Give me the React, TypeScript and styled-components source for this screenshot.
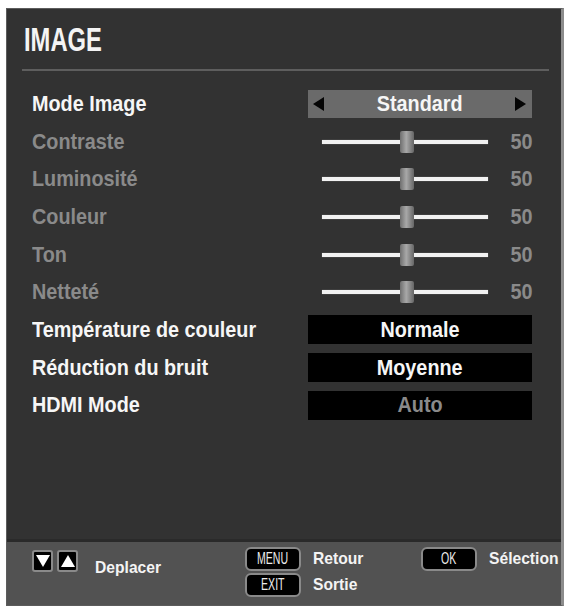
import styled, { createGlobalStyle } from 'styled-components';

const GlobalStyle = createGlobalStyle`
  html, body {
    margin: 0;
    padding: 0;
    background: #ffffff;
  }
  body {
    font-family: 'Liberation Sans', Arial, sans-serif;
  }
`;

const Screen = styled.div`
  box-sizing: border-box;
  width: 558px;
  height: 598px;
  margin: 8px 0 0 6px;
  background: #323232;
  border: 1px solid #5c5c5c;
  border-right: 3px solid #8c8c8c;
  display: flex;
  flex-direction: column;
`;

const Header = styled.div`
  padding: 12px 0 0 17px;
  height: 38px;
`;

const Title = styled.h1`
  margin: 0;
  font-size: 33px;
  line-height: 38px;
  font-weight: bold;
  color: #f4f4f4;
  transform: scaleX(0.72);
  transform-origin: left center;
`;

const Divider = styled.div`
  height: 2px;
  margin: 10px 12px 0 15px;
  background: #5e5e5e;
`;

const List = styled.div`
  display: grid;
  grid-auto-rows: 37.7px;
  padding: 14px 29px 0 25px;
`;

const Row = styled.div`
  display: grid;
  grid-template-columns: 1fr 224px;
  align-items: center;
`;

/* the TV font is a tall, slightly condensed grotesque */
const Narrow = styled.span<{ $origin?: string }>`
  display: inline-block;
  font-size: 22px;
  font-weight: bold;
  transform: scaleX(0.9);
  transform-origin: ${(p) => p.$origin ?? 'left'} center;
  white-space: nowrap;
`;

const Label = styled(Narrow)<{ $dim?: boolean }>`
  justify-self: start;
  color: ${(p) => (p.$dim ? '#8a8a8a' : '#f6f6f6')};
`;

const Selector = styled.div`
  height: 28px;
  background: #6a6a6a;
  display: flex;
  align-items: center;
  justify-content: space-between;
  padding: 0 6px 0 5px;
`;

const Arrow = styled.span<{ $dir: 'left' | 'right' }>`
  width: 0;
  height: 0;
  border-top: 7px solid transparent;
  border-bottom: 7px solid transparent;
  ${(p) =>
    p.$dir === 'left'
      ? 'border-right: 11px solid #050505;'
      : 'border-left: 11px solid #050505;'}
`;

const SelectorText = styled(Narrow)`
  color: #f6f6f6;
`;

const SliderCell = styled.div`
  display: flex;
  align-items: center;
  padding-left: 14px;
`;

const Track = styled.div`
  position: relative;
  width: 166px;
  height: 4px;
  background: #f2f2f2;
  box-shadow: 0 0 1px #bbb;
`;

const Knob = styled.div`
  position: absolute;
  top: 50%;
  width: 14px;
  height: 22px;
  transform: translate(-50%, -50%);
  border-radius: 2px;
  background: linear-gradient(to right, #6e6e6e, #a8a8a8 45%, #8a8a8a 70%, #666);
`;

const Amount = styled(Narrow)`
  margin-left: auto;
  color: #8a8a8a;
`;

const ValueBox = styled.div<{ $dim?: boolean }>`
  height: 29px;
  background: #000;
  display: flex;
  align-items: center;
  justify-content: center;
  color: ${(p) => (p.$dim ? '#8a8a8a' : '#f6f6f6')};
`;

const Footer = styled.div`
  margin-top: auto;
  height: 66px;
  background: #525252;
  border-top: 3px solid #2a2a2a;
  display: grid;
  grid-template-columns: 213px 176px auto;
  align-items: start;
  padding: 5px 0 0 25px;
  box-sizing: border-box;
`;

const FooterGroup = styled.div`
  display: flex;
  align-items: flex-start;
  gap: 13px;
`;

const KeyColumn = styled.div`
  display: grid;
  grid-template-columns: 56px auto;
  align-content: start;
  column-gap: 12px;
  row-gap: 2px;
  align-items: center;
`;

const NavKeys = styled.div`
  display: flex;
  gap: 4px;
  margin-right: 4px;
  padding-top: 3px;
`;

const NavKey = styled.div`
  box-sizing: border-box;
  width: 21px;
  height: 22px;
  border: 2px solid #8a8a8a;
  border-radius: 3px;
  background: #000;
  display: flex;
  align-items: center;
  justify-content: center;
`;

const Tri = styled.span<{ $up?: boolean }>`
  width: 0;
  height: 0;
  border-left: 7px solid transparent;
  border-right: 7px solid transparent;
  ${(p) =>
    p.$up ? 'border-bottom: 12px solid #fff;' : 'border-top: 12px solid #fff;'}
`;

const KeyCap = styled.div`
  box-sizing: border-box;
  height: 24px;
  border: 2px solid #8a8a8a;
  border-radius: 6px;
  background: #000;
  color: #ececec;
  font-size: 16px;
  display: flex;
  align-items: center;
  justify-content: center;
  span {
    display: inline-block;
    transform: scaleX(0.66);
  }
`;

const FooterText = styled.span`
  display: inline-block;
  justify-self: start;
  font-size: 17px;
  font-weight: bold;
  color: #f4f4f4;
  transform: scaleX(0.92);
  transform-origin: left center;
  white-space: nowrap;
`;

const DeplacerText = styled(FooterText)`
  margin-top: 11px;
`;

type Item =
  | { kind: 'select'; label: string; value: string }
  | { kind: 'slider'; label: string; value: number }
  | { kind: 'box'; label: string; value: string; dim?: boolean };

const items: Item[] = [
  { kind: 'select', label: 'Mode Image', value: 'Standard' },
  { kind: 'slider', label: 'Contraste', value: 50 },
  { kind: 'slider', label: 'Luminosité', value: 50 },
  { kind: 'slider', label: 'Couleur', value: 50 },
  { kind: 'slider', label: 'Ton', value: 50 },
  { kind: 'slider', label: 'Netteté', value: 50 },
  { kind: 'box', label: 'Température de couleur', value: 'Normale' },
  { kind: 'box', label: 'Réduction du bruit', value: 'Moyenne' },
  { kind: 'box', label: 'HDMI Mode', value: 'Auto', dim: true },
];

function MenuRow({ item }: { item: Item }) {
  if (item.kind === 'select') {
    return (
      <Row>
        <Label>{item.label}</Label>
        <Selector>
          <Arrow $dir="left" />
          <SelectorText $origin="center">{item.value}</SelectorText>
          <Arrow $dir="right" />
        </Selector>
      </Row>
    );
  }
  if (item.kind === 'slider') {
    return (
      <Row>
        <Label $dim>{item.label}</Label>
        <SliderCell>
          <Track>
            <Knob style={{ left: `${item.value + 1}%` }} />
          </Track>
          <Amount $origin="right">{item.value}</Amount>
        </SliderCell>
      </Row>
    );
  }
  return (
    <Row>
      <Label>{item.label}</Label>
      <ValueBox $dim={item.dim}>
        <Narrow $origin="center">{item.value}</Narrow>
      </ValueBox>
    </Row>
  );
}

export default function App() {
  return (
    <>
      <GlobalStyle />
      <Screen>
        <Header>
          <Title>IMAGE</Title>
        </Header>
        <Divider />
        <List>
          {items.map((item) => (
            <MenuRow key={item.label} item={item} />
          ))}
        </List>
        <Footer>
          <FooterGroup>
            <NavKeys>
              <NavKey>
                <Tri />
              </NavKey>
              <NavKey>
                <Tri $up />
              </NavKey>
            </NavKeys>
            <DeplacerText>Deplacer</DeplacerText>
          </FooterGroup>
          <KeyColumn>
            <KeyCap>
              <span>MENU</span>
            </KeyCap>
            <FooterText>Retour</FooterText>
            <KeyCap>
              <span>EXIT</span>
            </KeyCap>
            <FooterText>Sortie</FooterText>
          </KeyColumn>
          <KeyColumn>
            <KeyCap>
              <span>OK</span>
            </KeyCap>
            <FooterText>Sélection</FooterText>
          </KeyColumn>
        </Footer>
      </Screen>
    </>
  );
}
